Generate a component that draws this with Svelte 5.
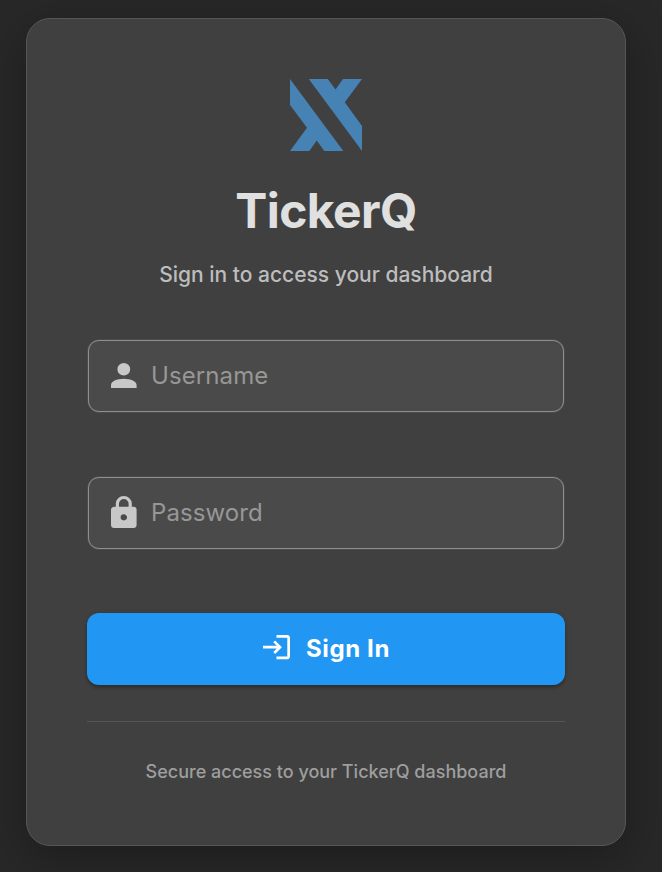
<script>
  let username = $state('');
  let password = $state('');
</script>

<main>
  <section class="card">
    <header>
      <svg class="logo" viewBox="0 0 72 72" aria-hidden="true">
        <path d="M0 0L53.3 72H34.3L26.7 61.5L19.3 72H0L17 48.7L0 26Z" />
        <path d="M18.8 0H37.8L45.5 10.5L53 0H72L54.8 23.3L72 47V72Z" />
      </svg>
      <h1>TickerQ</h1>
      <p>Sign in to access your dashboard</p>
    </header>
    <form onsubmit={(e) => e.preventDefault()}>
      <label class="field">
        <span class="slot">
          <svg class="account" viewBox="4 4 16 16" preserveAspectRatio="none"><path d="M12 4A4 4 0 0 1 16 8A4 4 0 0 1 12 12A4 4 0 0 1 8 8A4 4 0 0 1 12 4M12 14C16.42 14 20 15.79 20 18V20H4V18C4 15.79 7.58 14 12 14Z" /></svg>
        </span>
        <input bind:value={username} placeholder="Username" />
      </label>
      <label class="field">
        <span class="slot">
          <svg class="lock" viewBox="4 1 16 21" preserveAspectRatio="none"><path d="M12 17A2 2 0 0 0 14 15C14 13.89 13.1 13 12 13A2 2 0 0 0 10 15A2 2 0 0 0 12 17M18 8A2 2 0 0 1 20 10V20A2 2 0 0 1 18 22H6A2 2 0 0 1 4 20V10C4 8.89 4.9 8 6 8H7V6A5 5 0 0 1 12 1A5 5 0 0 1 17 6V8H18M12 3A3 3 0 0 0 9 6V8H15V6A3 3 0 0 0 12 3Z" /></svg>
        </span>
        <input type="password" bind:value={password} placeholder="Password" />
      </label>
      <button type="submit">
        <svg class="login" viewBox="2 3 20 18"><path d="M11 7L9.6 8.4L12.2 11H2V13H12.2L9.6 15.6L11 17L16 12L11 7M20 19H12V21H20C21.1 21 22 20.1 22 19V5C22 3.9 21.1 3 20 3H12V5H20V19Z" /></svg>
        <span>Sign In</span>
      </button>
    </form>
    <footer>Secure access to your TickerQ dashboard</footer>
  </section>
</main>

<style>
  :global(body) {
    margin: 0;
    background: #282828;
  }
  main {
    box-sizing: border-box;
    height: 872px;
    padding: 18px 36px 26px 26px;
    overflow: hidden;
    background: #282828;
    font-family: Inter, sans-serif;
  }
  .card {
    box-sizing: border-box;
    width: 600px;
    height: 828px;
    padding: 60px;
    border: 1px solid #565656;
    border-radius: 24px;
    background: #404040;
    box-shadow: 0 12px 48px rgba(0, 0, 0, 0.3);
  }
  header {
    display: flex;
    flex-direction: column;
    align-items: center;
    height: 261px;
  }
  .logo {
    width: 72px;
    height: 72px;
    fill: #4682b4;
  }
  h1 {
    margin: 31px 0 0;
    font-size: 48px;
    line-height: 58px;
    font-weight: 700;
    letter-spacing: -0.6px;
    color: #e0e0e0;
  }
  p {
    margin: 19px 0 0;
    font-size: 21px;
    line-height: 32px;
    font-weight: 500;
    color: #bdbdbd;
  }
  form {
    display: flex;
    flex-direction: column;
  }
  .field {
    box-sizing: border-box;
    display: flex;
    align-items: center;
    height: 72px;
    margin: 0 1px 65px;
    padding: 0 17px;
    border: 1px solid #8e8e8e;
    border-radius: 11px;
    background: #4a4a4a;
    box-shadow: 0 0 0 0.5px rgba(142, 142, 142, 0.3);
  }
  .slot {
    display: flex;
    align-items: center;
    justify-content: center;
    width: 36px;
    height: 36px;
    margin-right: 9px;
  }
  .account,
  .lock {
    flex: none;
    width: 25.6px;
    height: 25px;
    margin-left: 0.4px;
    fill: #c8c8c8;
  }
  .account {
    margin-top: -1px;
  }
  .lock {
    height: 32px;
    margin-top: -2px;
  }
  input {
    flex: 1;
    min-width: 0;
    padding: 0;
    border: 0;
    outline: 0;
    background: none;
    color: #e0e0e0;
    font: 400 24px/36px Inter, sans-serif;
    letter-spacing: 0.1px;
  }
  input::placeholder {
    color: #979797;
    opacity: 1;
  }
  button {
    display: flex;
    align-items: center;
    justify-content: center;
    gap: 16px;
    height: 72px;
    margin-top: -1px;
    padding: 0 0 0 1px;
    border: 0;
    border-radius: 12px;
    background: #2196f3;
    color: #fff;
    font: 700 24px/36px Inter, sans-serif;
    letter-spacing: 0.6px;
    box-shadow: 0 3px 3px rgba(0, 0, 0, 0.2), 0 1px 5px rgba(0, 0, 0, 0.15);
  }
  .login {
    width: 27px;
    height: 24.3px;
    margin-top: -3px;
    fill: #fff;
  }
  footer {
    margin-top: 36px;
    padding-top: 36px;
    border-top: 1px solid #565656;
    text-align: center;
    font-size: 18px;
    line-height: 28px;
    font-weight: 500;
    color: #9e9e9e;
  }
</style>
